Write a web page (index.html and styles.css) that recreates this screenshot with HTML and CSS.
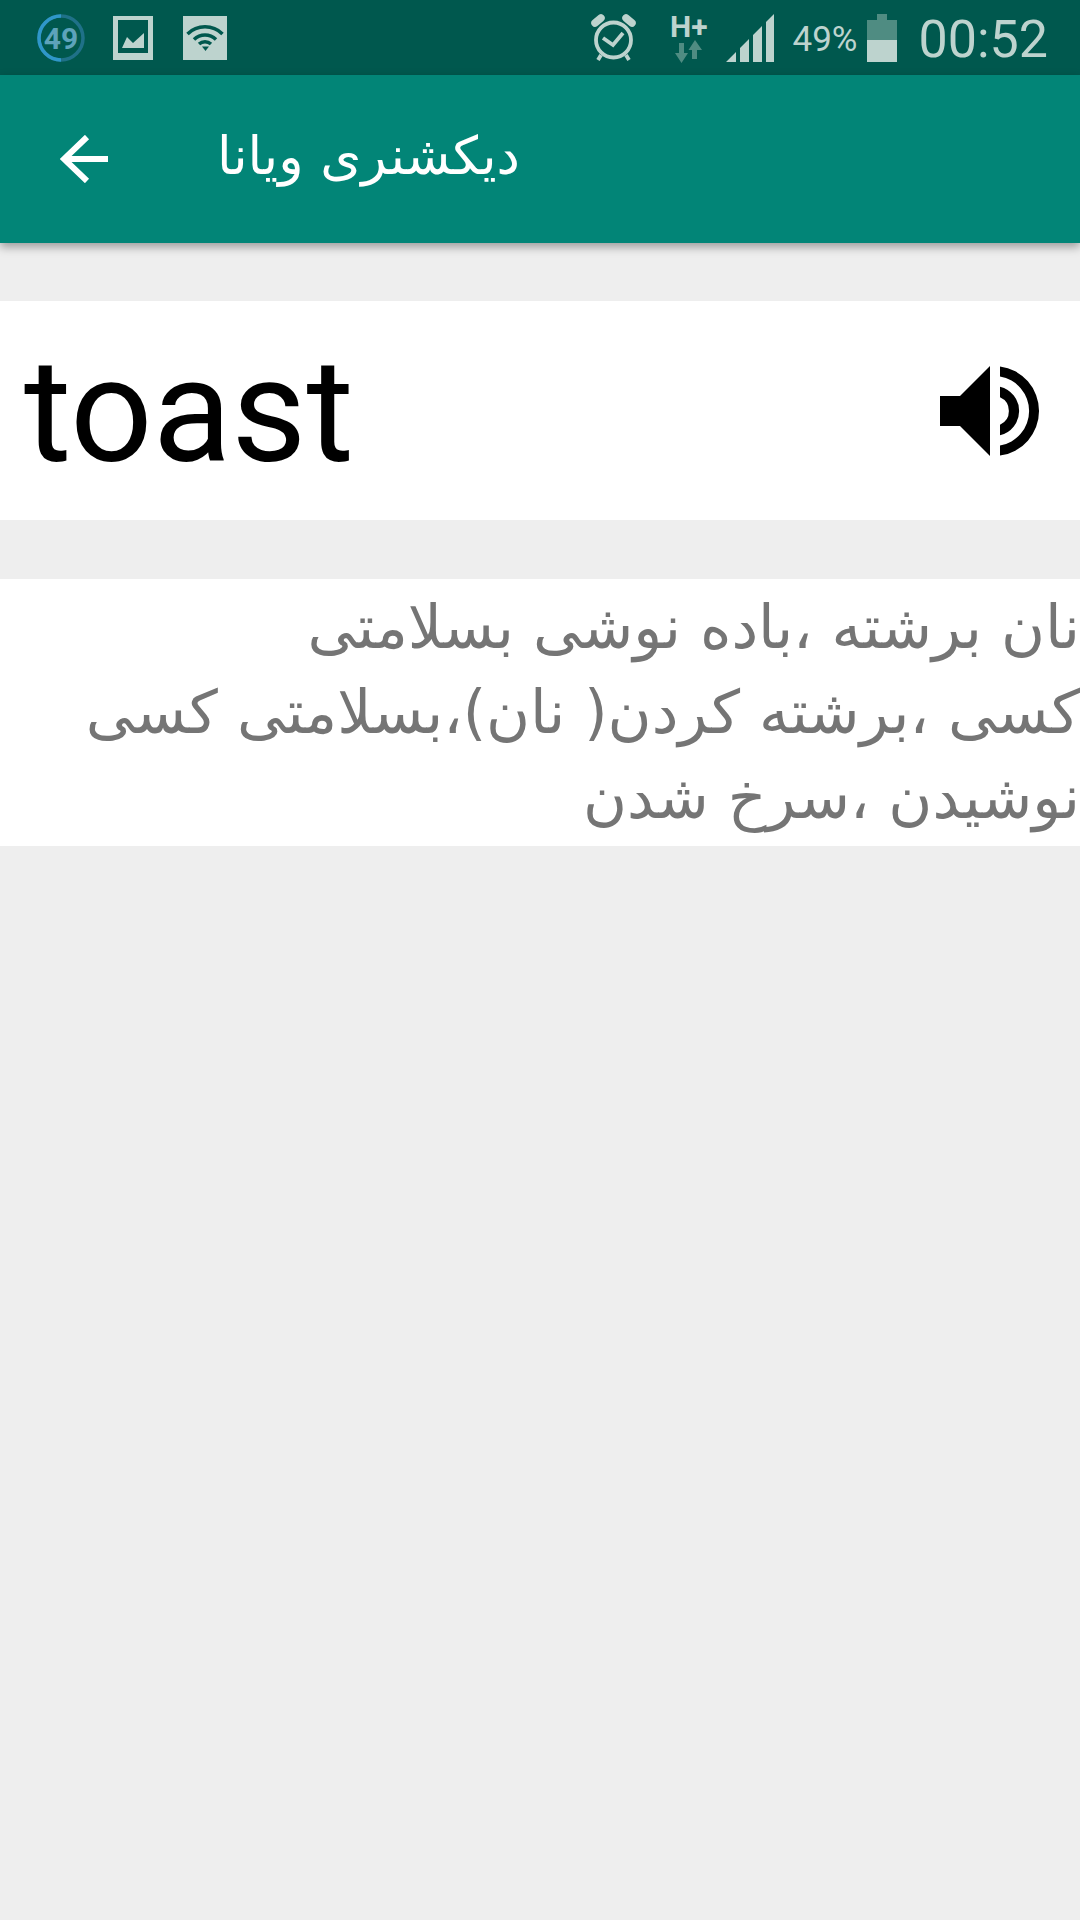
FILE: index.html
```html
<!DOCTYPE html>
<html>
<head>
<meta http-equiv="Content-Type" content="text/html; charset=utf-8"/>
<title>toast</title>
<link rel="stylesheet" href="styles.css">
</head>
<body>

<div class="statusbar">
  <div class="status-left">
    <svg class="ic-usage" width="48" height="48" viewBox="0 0 48 48">
      <circle cx="24" cy="24" r="22" fill="none" stroke="#1f7188" stroke-width="3.5"/>
      <path d="M24 2 A22 22 0 0 0 24 46" fill="none" stroke="#2f97c9" stroke-width="3.5"/>
      <text x="24" y="35" text-anchor="middle" class="usage-num">49</text>
    </svg>
    <svg class="ic-pic" width="40" height="44" viewBox="0 0 40 44">
      <path fill="#bdd3ce" fill-rule="evenodd" d="M0 0H40V44H0ZM5 4V37H35V4Z"/>
      <path fill="#bdd3ce" d="M9 32L14 21L20 27L31 17V32Z"/>
    </svg>
    <svg class="ic-wifi" width="44" height="44" viewBox="0 0 44 44">
      <rect width="44" height="44" fill="#bdd3ce"/>
      <g fill="none" stroke="#00584e" stroke-width="3.500">
        <path d="M4.500 18 A25 25 0 0 1 39.500 18"/>
        <path d="M11 23.500 A16 16 0 0 1 33 23.500"/>
        <path d="M16 28 A9 9 0 0 1 28 28"/>
      </g>
      <path fill="#00584e" d="M19 30.500 H26 L22.500 35Z"/>
    </svg>
  </div>
  <div class="status-right">
    <svg class="ic-alarm" width="45" height="47" viewBox="0 0 45 47">
      <g fill="none" stroke="#bdd3ce" stroke-width="3.800">
        <circle cx="22.500" cy="26" r="17.500"/>
        <path d="M12 24L22 31L32 19"/>
        <path d="M10 41L7 46M35 41L38 46"/>
      </g>
      <path d="M4 9L10 4M41 9L35 4" fill="none" stroke="#bdd3ce" stroke-width="7.500" stroke-linecap="round"/>
    </svg>
    <div class="net">
      <span class="net-type">H+</span>
      <svg width="27" height="23" viewBox="0 0 27 23">
        <path fill="#4f8c82" d="M4 3H9V13H13L6.500 23L0 13H4Z M17 19V10H13.500L20 0L27 10H22V19Z"/>
      </svg>
    </div>
    <svg class="ic-signal" width="48" height="48" viewBox="0 0 48 48">
      <path fill="#bdd3ce" d="M0 48L10 38V48Z M14 48V34L23 25V48Z M27 48V21L36 12V48Z M40 48V8L48 0V48Z"/>
    </svg>
    <span class="batt-pct">49%</span>
    <svg class="ic-batt" width="30" height="48" viewBox="0 0 30 48">
      <path fill="#4f8c82" d="M10 0H20V6H30V26H0V6H10Z"/>
      <rect y="26" width="30" height="22" fill="#bdd3ce"/>
    </svg>
    <span class="clock">00:52</span>
  </div>
</div>

<div class="toolbar">
  <svg class="back" width="48" height="48" viewBox="0 0 48 48">
    <path d="M48 24H5M27 2L4 24L27 46" fill="none" stroke="#fff" stroke-width="6"/>
  </svg>
  <div class="title">دیکشنری ویانا</div>
</div>

<div class="card word">
  <div class="word-text">toast</div>
  <svg class="speaker" width="100" height="90" viewBox="0 0 100 90">
    <path d="M0 30H20L50 0V90L20 60H0Z"/>
    <path d="M60 0.400A45 45 0 0 1 60 89.600V79.500A35 35 0 0 0 60 10.500Z"/>
    <path d="M60 20.700A25 25 0 0 1 60 69.300V58.700A15 15 0 0 0 60 31.300Z"/>
  </svg>
</div>

<div class="card meaning" dir="rtl">نان برشته ،باده نوشی بسلامتی<br>کسی ،برشته کردن( نان)،بسلامتی کسی<br>نوشیدن ،سرخ شدن</div>

</body>
</html>
```
FILE: styles.css
```css
html, body {
  margin: 0;
  padding: 0;
}

body {
  width: 1080px;
  height: 1920px;
  overflow: hidden;
  background-color: #eeeeee;
  font-family: Roboto, sans-serif;
}

.statusbar {
  height: 75px;
  background-color: #00584e;
  color: #bdd3ce;
  display: flex;
  justify-content: space-between;
  box-sizing: border-box;
  padding: 0 32px 0 37px;
}

.status-left, .status-right {
  display: flex;
  align-items: center;
}

.status-left svg {
  margin-right: 30px;
}

.status-left .ic-usage {
  margin-right: 28px;
}

.usage-num {
  font-family: Roboto, sans-serif;
  font-weight: 700;
  font-size: 30px;
  fill: #5da3bb;
}

.ic-alarm {
  margin-right: 34px;
}

.net {
  display: flex;
  flex-direction: column;
  align-items: center;
  margin-right: 18px;
}

.net-type {
  font-weight: 700;
  font-size: 30px;
  line-height: 27px;
}

.batt-pct {
  font-size: 35px;
  margin: 4px 9px 0 19px;
}

.clock {
  font-weight: 400;
  font-size: 52px;
  margin-left: 22px;
  margin-top: 4px;
}

.toolbar {
  height: 168px;
  background-color: #028577;
  box-shadow: 0 4px 9px rgba(0, 0, 0, 0.35);
  display: flex;
  align-items: center;
  position: relative;
}

.back {
  margin-left: 60px;
}

.title {
  margin-left: 109px;
  padding-bottom: 8px;
  color: #fff;
  font-family: "DejaVu Sans", sans-serif;
  font-size: 52.500px;
}

.card {
  background-color: #fff;
  margin-top: 58px;
}

.word {
  height: 219px;
  display: flex;
  align-items: center;
  justify-content: space-between;
  padding: 0 40px 0 24px;
}

.word-text {
  font-size: 145px;
  color: #000;
}

.meaning {
  box-sizing: border-box;
  height: 267px;
  margin-top: 59px;
  padding-top: 6px;
  font-family: "DejaVu Sans", sans-serif;
  font-size: 60px;
  line-height: 85px;
  color: #757575;
}
```
